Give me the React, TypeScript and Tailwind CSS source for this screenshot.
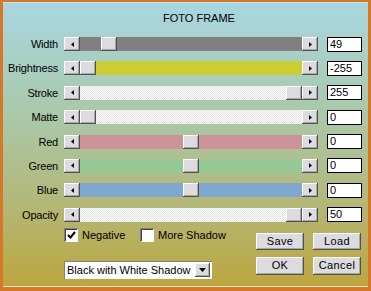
import React from "react";

const FONT = { fontFamily: '"Liberation Sans", Arial, sans-serif' };

type Row = { label: string; track: string; thumb: number; value: string };

// track is 222px wide, thumb 16px → offsets 0..206
const ROWS: Row[] = [
  { label: "Width", track: "bg-[#808080]", thumb: 21, value: "49" },
  { label: "Brightness", track: "bg-[#cccc33]", thumb: 0, value: "-255" },
  { label: "Stroke", track: "dither", thumb: 206, value: "255" },
  { label: "Matte", track: "dither", thumb: 0, value: "0" },
  { label: "Red", track: "bg-[#cc9499]", thumb: 103, value: "0" },
  { label: "Green", track: "bg-[#96c894]", thumb: 103, value: "0" },
  { label: "Blue", track: "bg-[#7fa8cc]", thumb: 103, value: "0" },
  { label: "Opacity", track: "dither", thumb: 206, value: "50" },
];

const raised =
  "bg-[#dcdce0] shadow-[inset_-1px_-1px_#505050,inset_1px_1px_#ffffff,inset_-2px_-2px_#a8a8a8]";

function Arrow({ dir }: { dir: "left" | "right" | "down" }) {
  if (dir === "down")
    return (
      <svg width="7" height="4" viewBox="0 0 7 4">
        <polygon points="0,0 7,0 3.5,4" fill="#000" />
      </svg>
    );
  return (
    <svg width="3" height="5" viewBox="0 0 3 5">
      <polygon points={dir === "left" ? "3,0 3,5 0,2.5" : "0,0 0,5 3,2.5"} fill="#000" />
    </svg>
  );
}

function Slider({ row }: { row: Row }) {
  const trackCls =
    row.track === "dither"
      ? "bg-[repeating-conic-gradient(#ffffff_0_25%,#e2e2e2_0_50%)] bg-size-[2px_2px]"
      : row.track;
  return (
    <div className="flex h-[14px] w-[254px]">
      <div className={`flex w-[16px] items-center justify-center ${raised}`}>
        <Arrow dir="left" />
      </div>
      <div className={`flex w-[222px] ${trackCls}`}>
        <div className={`h-full w-[16px] ${raised}`} style={{ marginLeft: row.thumb }} />
      </div>
      <div className={`flex w-[16px] items-center justify-center ${raised}`}>
        <Arrow dir="right" />
      </div>
    </div>
  );
}

function Check({ checked, label, w }: { checked: boolean; label: string; w: string }) {
  return (
    <div className={`flex items-center ${w}`}>
      <div className="flex h-[14px] w-[14px] shrink-0 items-center justify-center bg-white shadow-[inset_1px_1px_#808080,inset_-1px_-1px_#ffffff,inset_2px_2px_#404040]">
        {checked && (
          <svg width="9" height="8" viewBox="0 0 9 8" className="ml-[1px] mt-[1px]">
            <path d="M1 4 L3.5 6.5 L8 1" stroke="#000" strokeWidth="2" fill="none" />
          </svg>
        )}
      </div>
      <span className="ml-[4px] whitespace-nowrap text-[11px] leading-[14px] text-black">{label}</span>
    </div>
  );
}

function Btn({ children, h }: { children: React.ReactNode; h: string }) {
  return (
    <div
      className={`flex w-[48px] items-center justify-center whitespace-nowrap text-[11px] tracking-[0.4px] text-black ${h} ${raised}`}
    >
      {children}
    </div>
  );
}

export default function App() {
  return (
    <div className="h-[291px] w-[371px] bg-[#d4782a] px-[3px] pt-[2px] pb-[4px]" style={FONT}>
      <div className="flex h-full flex-col border-t border-b border-t-[#c0e4ee] border-b-[#e8e4c8] bg-[linear-gradient(to_bottom,#a8d6e2_0%,#aac8a8_40%,#b2ba80_66%,#bca640_100%)]">
        <div className="mt-[9px] pl-[160px] text-[11px] leading-[13px] text-black">FOTO FRAME</div>

        <div className="mt-[12px] flex flex-col gap-y-[10.4px]">
          {ROWS.map((r) => (
            <div key={r.label} className="flex h-[14px] items-center">
              <div className="w-[55px] whitespace-nowrap text-right text-[11px] leading-[14px] tracking-[-0.2px] text-black">
                {r.label}
              </div>
              <div className="ml-[6px]">
                <Slider row={r} />
              </div>
              <div className="ml-[9px] flex h-[15px] w-[35px] items-center border border-black bg-white pl-[2px] text-[11px] leading-[13px] text-black">
                {r.value}
              </div>
            </div>
          ))}
        </div>

        <div className="mt-[6px] flex pl-[61px]">
          <div className="flex w-[192px] flex-col">
            <div className="flex items-center">
              <Check checked label="Negative" w="w-[76px]" />
              <Check checked={false} label="More Shadow" w="w-[100px]" />
            </div>
            <div className="mt-[19px] flex h-[18px] w-[148px] items-center bg-white pl-[3px] pr-[2px] shadow-[inset_1px_1px_#808080,inset_-1px_-1px_#ffffff]">
              <span className="flex-1 whitespace-nowrap text-[11px] leading-[14px] text-black">
                Black with White Shadow
              </span>
              <div className={`flex h-[14px] w-[15px] shrink-0 items-center justify-center ${raised}`}>
                <Arrow dir="down" />
              </div>
            </div>
          </div>
          <div className="mt-[5px] grid grid-cols-2 gap-x-[9px] gap-y-[7px] self-start">
            <Btn h="h-[17px]">Save</Btn>
            <Btn h="h-[17px]">Load</Btn>
            <Btn h="h-[18px]">OK</Btn>
            <Btn h="h-[18px]">Cancel</Btn>
          </div>
        </div>
      </div>
    </div>
  );
}
